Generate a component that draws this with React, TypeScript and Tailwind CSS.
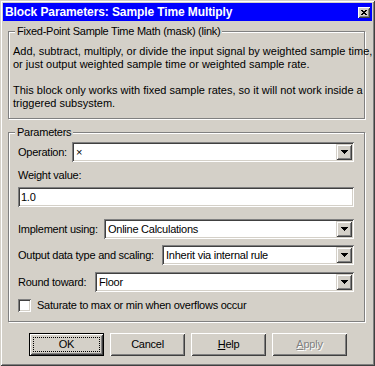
import React from "react";

const sunken =
  "shadow-[inset_1px_1px_#808080,inset_-1px_-1px_#ffffff,inset_2px_2px_#404040,inset_-2px_-2px_#d4d0c8]";
const raised =
  "shadow-[inset_1px_1px_#ffffff,inset_-1px_-1px_#404040,inset_2px_2px_#d4d0c8,inset_-2px_-2px_#808080]";
const comboBtn =
  "shadow-[inset_1px_1px_#d4d0c8,inset_-1px_-1px_#404040,inset_2px_2px_#ffffff,inset_-2px_-2px_#808080]";

function Arrow() {
  return (
    <svg width="7" height="4" shapeRendering="crispEdges">
      <rect x="0" y="0" width="7" height="1" fill="#000" />
      <rect x="1" y="1" width="5" height="1" fill="#000" />
      <rect x="2" y="2" width="3" height="1" fill="#000" />
      <rect x="3" y="3" width="1" height="1" fill="#000" />
    </svg>
  );
}

function Combo({ value, className = "" }: { value: string; className?: string }) {
  return (
    <div className={`h-[20px] bg-white flex items-center p-[2px] ${sunken} ${className}`}>
      <span className="flex-1 pl-[2px] leading-[13px] whitespace-nowrap overflow-hidden">{value}</span>
      <div className={`w-[16px] h-[16px] bg-[#d4d0c8] flex items-center justify-center ${comboBtn}`}>
        <Arrow />
      </div>
    </div>
  );
}

function Group({ title, children, className = "" }: { title: string; children: React.ReactNode; className?: string }) {
  return (
    <fieldset
      className={`ml-[5px] w-[357px] border border-[#808080] shadow-[1px_1px_0_#ffffff,inset_1px_1px_0_#ffffff] p-0 m-0 min-w-0 ${className}`}
    >
      <legend className="ml-[6px] px-[2px] leading-[13px] bg-[#d4d0c8]">{title}</legend>
      {children}
    </fieldset>
  );
}

function Button({
  children,
  isDefault = false,
  disabled = false,
}: {
  children: React.ReactNode;
  isDefault?: boolean;
  disabled?: boolean;
}) {
  if (isDefault) {
    return (
      <div className="w-[75px] h-[23px] border border-black bg-[#d4d0c8]">
        <div className={`w-full h-full p-[3px] ${raised}`}>
          <div className="w-full h-full border border-dotted border-black flex items-center justify-center leading-[13px]">
            {children}
          </div>
        </div>
      </div>
    );
  }
  return (
    <div
      className={`w-[75px] h-[23px] bg-[#d4d0c8] flex items-center justify-center leading-[13px] ${raised} ${
        disabled ? "text-[#808080] [text-shadow:1px_1px_0_#ffffff]" : ""
      }`}
    >
      {children}
    </div>
  );
}

export default function App() {
  return (
    <div
      className="w-[375px] h-[366px] overflow-hidden bg-[#d4d0c8] p-[3px] flex flex-col text-[11px] leading-[13px] tracking-[-0.25px] text-black font-['Liberation_Sans',Arial,sans-serif] shadow-[inset_1px_1px_#d4d0c8,inset_-1px_-1px_#404040,inset_2px_2px_#ffffff,inset_-2px_-2px_#808080]"
    >
      {/* Title bar */}
      <div className="h-[18px] bg-[#0000ff] flex items-center justify-between pl-[2px] pr-[2px]">
        <span className="text-white font-bold text-[12px] tracking-[-0.1px]">Block Parameters: Sample Time Multiply</span>
        <div className={`w-[12px] h-[11px] bg-[#d4d0c8] flex items-center justify-center ${raised}`}>
          <svg width="6" height="5" shapeRendering="crispEdges">
            <path d="M0 0L6 5M6 0L0 5" stroke="#000" strokeWidth="1.2" />
          </svg>
        </div>
      </div>

      <Group title="Fixed-Point Sample Time Math (mask) (link)" className="mt-[4px]">
        <div className="pl-[4px] pt-[7px] pb-[8px] whitespace-nowrap tracking-[0px]">
          <p>Add, subtract, multiply, or divide the input signal by weighted sample time,</p>
          <p>or just output weighted sample time or weighted sample rate.</p>
          <p>&nbsp;</p>
          <p>This block only works with fixed sample rates, so it will not work inside a</p>
          <p>triggered subsystem.</p>
        </div>
      </Group>

      <Group title="Parameters" className="mt-[7px]">
        <div className="pl-[9px] pr-[10px] pt-[3px] pb-[9px] flex flex-col">
          <div className="flex items-center">
            <span className="w-[54px] whitespace-nowrap">Operation:</span>
            <Combo value="×" className="flex-1" />
          </div>
          <div className="mt-[7px]">Weight value:</div>
          <div className={`mt-[5px] h-[20px] bg-white flex items-center pl-[3px] ${sunken}`}>1.0</div>
          <div className="flex items-center mt-[12px]">
            <span className="w-[86px] whitespace-nowrap">Implement using:</span>
            <Combo value="Online Calculations" className="flex-1" />
          </div>
          <div className="flex items-center mt-[6px]">
            <span className="w-[144px] whitespace-nowrap">Output data type and scaling:</span>
            <Combo value="Inherit via internal rule" className="flex-1" />
          </div>
          <div className="flex items-center mt-[7px]">
            <span className="w-[77px] whitespace-nowrap">Round toward:</span>
            <Combo value="Floor" className="flex-1" />
          </div>
          <div className="flex items-center mt-[7px]">
            <div className={`w-[13px] h-[13px] bg-white ${sunken}`} />
            <span className="ml-[6px]">Saturate to max or min when overflows occur</span>
          </div>
        </div>
      </Group>

      <div className="flex gap-[6px] ml-[26px] mt-[11px]">
        <Button isDefault>OK</Button>
        <Button>Cancel</Button>
        <Button>
          <span className="underline">H</span>elp
        </Button>
        <Button disabled>
          <span className="underline">A</span>pply
        </Button>
      </div>
    </div>
  );
}
